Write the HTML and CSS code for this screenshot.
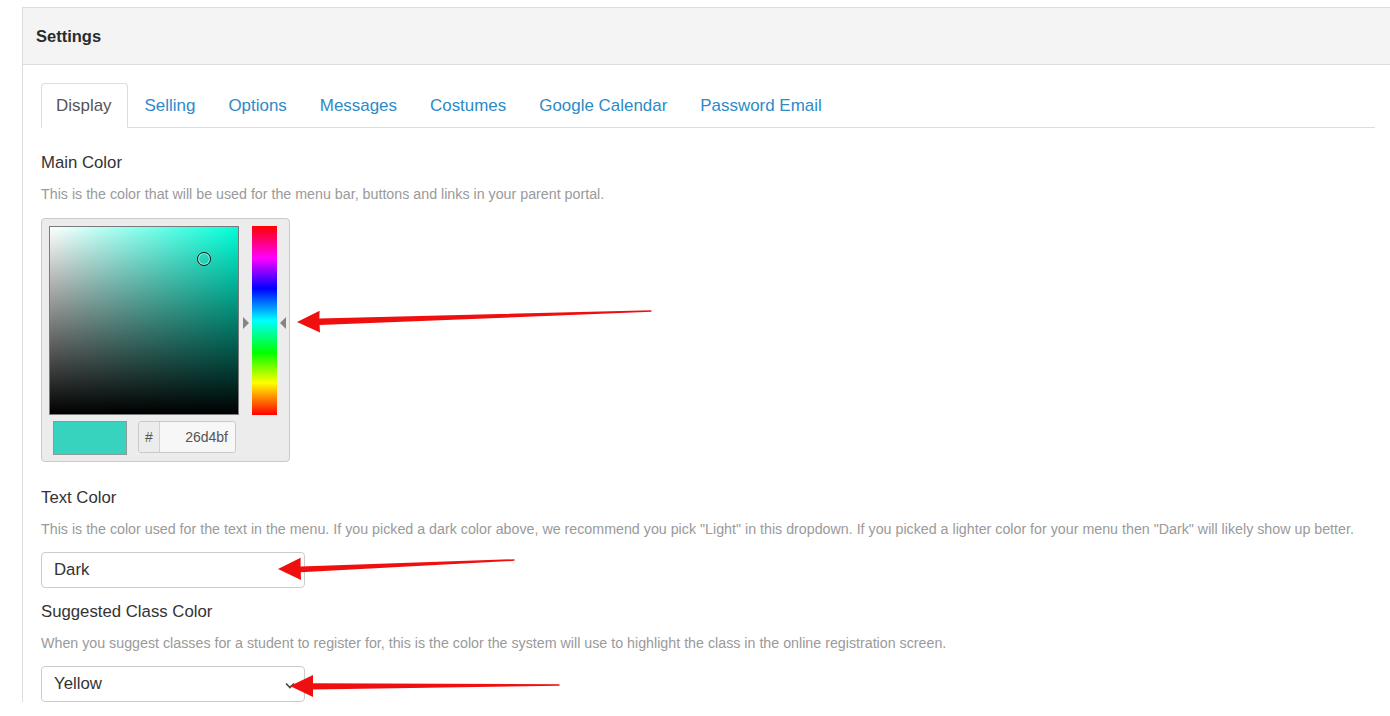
FILE: index.html
```html
<!DOCTYPE html>
<html>
<head>
<meta charset="utf-8">
<link rel="stylesheet" href="styles.css">
</head>
<body>
<div class="panel">
  <div class="panel-head">Settings</div>
  <div class="panel-body">
    <ul class="tabs">
      <li class="tab active">Display</li>
      <li class="tab">Selling</li>
      <li class="tab">Options</li>
      <li class="tab">Messages</li>
      <li class="tab">Costumes</li>
      <li class="tab">Google Calendar</li>
      <li class="tab">Password Email</li>
    </ul>

    <div class="group group-picker">
      <div class="label">Main Color</div>
      <div class="help">This is the color that will be used for the menu bar, buttons and links in your parent portal.</div>
      <div class="picker">
        <div class="picker-top">
          <div class="sat">
            <span class="sat-dot"></span>
          </div>
          <div class="hue-wrap">
            <span class="hue-arrow left"></span>
            <div class="hue"></div>
            <span class="hue-arrow right"></span>
          </div>
        </div>
        <div class="picker-bottom">
          <div class="swatch"></div>
          <div class="hex">
            <span class="hex-addon">#</span>
            <span class="hex-input">26d4bf</span>
          </div>
        </div>
      </div>
    </div>

    <div class="group">
      <div class="label">Text Color</div>
      <div class="help">This is the color used for the text in the menu. If you picked a dark color above, we recommend you pick "Light" in this dropdown. If you picked a lighter color for your menu then "Dark" will likely show up better.</div>
      <div class="field">Dark</div>
    </div>

    <div class="group">
      <div class="label">Suggested Class Color</div>
      <div class="help">When you suggest classes for a student to register for, this is the color the system will use to highlight the class in the online registration screen.</div>
      <div class="field select">Yellow
        <svg class="chev" width="10" height="7" viewBox="0 0 10 7"><path d="M1 1.5 L5 5.5 L9 1.5" fill="none" stroke="#444" stroke-width="1.6"/></svg>
      </div>
    </div>
  </div>
</div>

<svg class="annot" width="1390" height="716" viewBox="0 0 1390 716">
  <polygon fill="#f00f0f" points="297,322 320,332.5 319.6,325 651.5,311.8 651.4,310.2 319.4,318.6 319.6,310.8"/>
  <polygon fill="#f00f0f" points="278,569 301,580 300.8,572.2 514.5,560.8 514.4,559.2 300.6,566.4 300.6,557.8"/>
  <polygon fill="#f00f0f" points="290,686 313,697 313,689.5 559.5,685.8 559.5,684.2 313,683.2 313,675"/>
</svg>
</body>
</html>
```

FILE: styles.css
```css
html, body {
  margin: 0;
  padding: 0;
  background: #fff;
  overflow: hidden;
}
body {
  font-family: "Liberation Sans", Arial, sans-serif;
  color: #333;
  width: 1390px;
  height: 716px;
  position: relative;
}
.panel {
  margin: 7px 0 0 22px;
  width: 1372px;
  border: 1px solid #ddd;
  border-bottom: none;
  box-sizing: border-box;
}
.panel-head {
  height: 56px;
  background: #f4f4f4;
  border-bottom: 1px solid #ddd;
  display: flex;
  align-items: center;
  padding-left: 13px;
  font-size: 16.5px;
  font-weight: bold;
  color: #2b2b2b;
}
.panel-body {
  padding: 18px 18px 0 18px;
}
.tabs {
  list-style: none;
  margin: 0;
  padding: 0;
  display: flex;
  border-bottom: 1px solid #ddd;
}
.tab {
  font-size: 16.95px;
  line-height: 23px;
  padding: 10px 15px 10px 14px;
  margin-right: 2px;
  margin-bottom: -1px;
  border: 1px solid transparent;
  border-radius: 4px 4px 0 0;
  color: #2d8ac7;
}
.tab.active {
  color: #555;
  border-color: #ddd;
  border-bottom-color: #fff;
  background: #fff;
}
.group {
  margin-top: 13px;
}
.group-picker {
  margin-top: 24px;
  margin-bottom: 25px;
}
.group-picker + .group {
  margin-top: 0;
}
.label {
  font-size: 16.75px;
  line-height: 22px;
  color: #333;
}
.help {
  margin-top: 11px;
  font-size: 14.25px;
  line-height: 18px;
  color: #9a9a9a;
}
.picker {
  margin-top: 15px;
  width: 249px;
  height: 244px;
  box-sizing: border-box;
  background: #ececec;
  border: 1px solid #c9c9c9;
  border-radius: 4px;
  padding: 7px;
}
.picker-top {
  display: flex;
  gap: 13px;
}
.sat {
  position: relative;
  width: 190px;
  height: 189px;
  box-sizing: border-box;
  border: 1px solid #7a7a7a;
  background:
    linear-gradient(to top, #000, rgba(0,0,0,0)),
    linear-gradient(to right, #fff, #00ffd9);
}
.sat-dot {
  position: absolute;
  left: 147px;
  top: 25px;
  width: 12px;
  height: 12px;
  border: 1px solid #111;
  border-radius: 50%;
  box-shadow: inset 0 0 0 1px rgba(255,255,255,0.6);
}
.hue-wrap {
  position: relative;
}
.hue {
  width: 25px;
  height: 189px;
  background: linear-gradient(to bottom, #ff0000 0%, #ff00ff 17%, #0000ff 33%, #00ffff 50%, #00ff00 67%, #ffff00 83%, #ff0000 100%);
}
.hue-arrow {
  position: absolute;
  top: 91px;
  width: 0;
  height: 0;
  border-top: 6px solid transparent;
  border-bottom: 6px solid transparent;
}
.hue-arrow.left {
  left: -9px;
  border-left: 6px solid #858585;
}
.hue-arrow.right {
  right: -9px;
  border-right: 6px solid #858585;
}
.picker-bottom {
  display: flex;
  align-items: flex-start;
  margin-top: 6px;
  padding-left: 4px;
  gap: 11px;
}
.swatch {
  width: 74px;
  height: 34px;
  box-sizing: border-box;
  background: #38d3be;
  border: 1px solid #8a9a98;
}
.hex {
  display: flex;
  width: 98px;
  height: 32px;
  box-sizing: border-box;
  border: 1px solid #c9c9c9;
  border-radius: 3px;
  overflow: hidden;
  font-size: 14px;
  color: #555;
}
.hex-addon {
  width: 20px;
  display: flex;
  align-items: center;
  justify-content: center;
  background: #ececec;
  border-right: 1px solid #d0d0d0;
}
.hex-input {
  flex: 1;
  display: flex;
  align-items: center;
  justify-content: flex-end;
  padding-right: 7px;
  background: #f7f7f7;
}
.field {
  margin-top: 14px;
  width: 264px;
  height: 36px;
  box-sizing: border-box;
  border: 1px solid #ccc;
  border-radius: 4px;
  padding-left: 12px;
  display: flex;
  align-items: center;
  font-size: 16.75px;
  color: #333;
  position: relative;
}
.chev {
  position: absolute;
  right: 9px;
  top: 15px;
}
.annot {
  position: absolute;
  left: 0;
  top: 0;
  pointer-events: none;
}
```
